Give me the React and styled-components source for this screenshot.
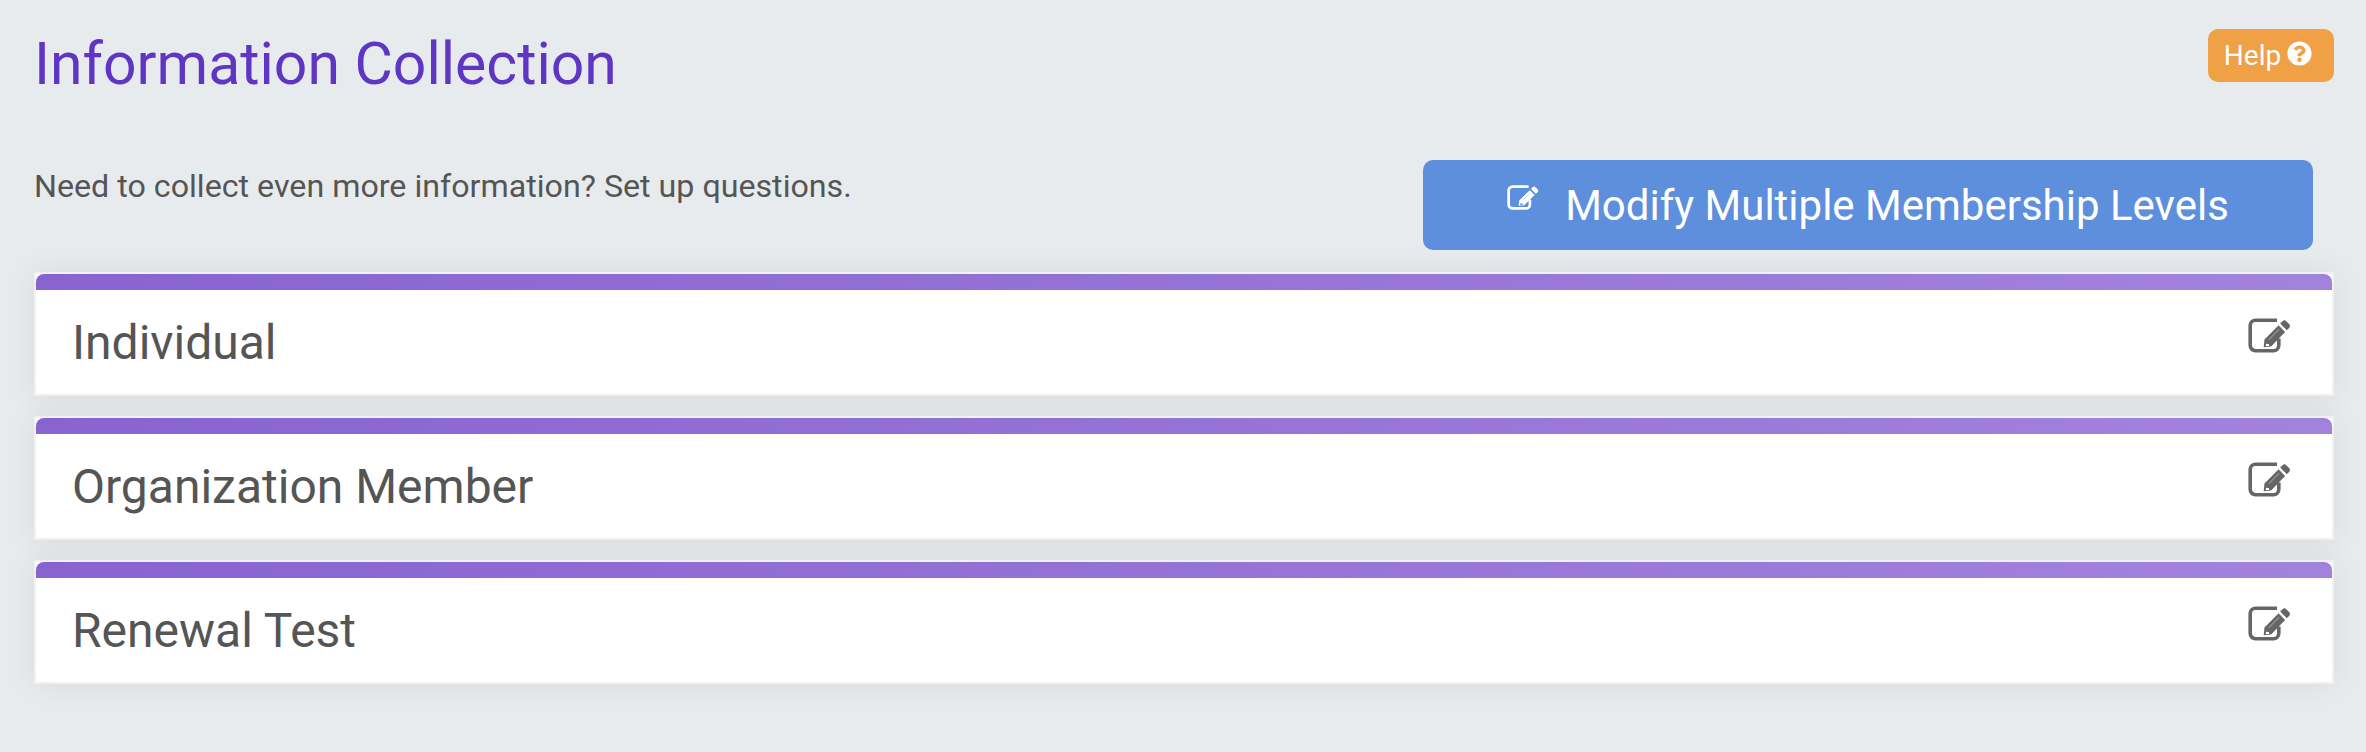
import React from "react";
import styled, { createGlobalStyle } from "styled-components";
import { FaQuestionCircle } from "react-icons/fa";

const GlobalStyle = createGlobalStyle`
  html, body {
    margin: 0;
    padding: 0;
    background: #e8ebee;
    font-family: Roboto, "Liberation Sans", sans-serif;
    color: #555;
  }
`;

const Page = styled.div`
  box-sizing: border-box;
  width: 2366px;
  height: 752px;
  overflow: hidden;
  padding: 29px 32px 0 34px;
`;

const Header = styled.header`
  display: flex;
  justify-content: space-between;
  align-items: flex-start;
  height: 131px;
`;

const Title = styled.h1`
  margin: 0;
  font-size: 58.9px;
  line-height: 70px;
  font-weight: 400;
  color: #5f36c4;
`;

const HelpButton = styled.button`
  display: flex;
  align-items: center;
  justify-content: center;
  gap: 6px;
  width: 126px;
  height: 53px;
  padding: 0 6px 0 0;
  border: 0;
  border-radius: 10px;
  background: #f0a045;
  color: #fff;
  font-family: inherit;
  font-size: 28px;
  svg {
    width: 25px;
    height: 25px;
    margin-bottom: 5px;
  }
`;

const IntroRow = styled.div`
  display: flex;
  justify-content: space-between;
  align-items: flex-start;
  height: 112px;
  padding-right: 21px;
`;

const Intro = styled.p`
  margin: 0;
  padding-top: 6px;
  font-size: 32.2px;
  line-height: 40px;
  color: #555;
`;

const ModifyButton = styled.button`
  display: flex;
  align-items: center;
  justify-content: center;
  gap: 26px;
  width: 890px;
  height: 90px;
  border: 0;
  border-radius: 10px;
  background: #5e8fdd;
  color: #fff;
  font-family: inherit;
  font-size: 42px;
  svg {
    width: 32px;
    height: 25px;
    margin-bottom: 15px;
  }
`;

const LevelList = styled.div`
  display: flex;
  flex-direction: column;
  gap: 20px;
`;

const LevelCard = styled.section`
  box-sizing: border-box;
  height: 124px;
  border: 2px solid #f1f1f1;
  background: #fff;
  box-shadow: 0 0 30px rgba(0, 0, 0, 0.07);
`;

const LevelStripe = styled.div`
  height: 16px;
  border-radius: 8px 8px 0 0;
  background: linear-gradient(90deg, #8764d0, #a283dc);
`;

const LevelBody = styled.div`
  display: flex;
  justify-content: space-between;
  align-items: center;
  height: 104px;
  padding: 0 41px 0 36px;
`;

const LevelName = styled.h2`
  margin: 0;
  font-size: 48px;
  font-weight: 400;
  color: #555;
`;

const CardIcon = styled.span`
  display: flex;
  margin-bottom: 14px;
  color: #666;
  svg {
    width: 43px;
    height: 35px;
  }
`;

// the FA edit glyph, the package version has an outlined pencil
function EditGlyph({ cut }) {
  return (
    <svg viewBox="0 0 43 34" fill="none" preserveAspectRatio="none">
      <path
        d="M29 2.2H7.5a5.3 5.3 0 0 0-5.3 5.3v19a5.3 5.3 0 0 0 5.3 5.3h18a5.3 5.3 0 0 0 5.3-5.3V20"
        stroke="currentColor"
        strokeWidth="3.6"
      />
      <path d="M15.7 28.3l.8-7.3L30.6 7l6.5 6.5-14 14.2z" fill="currentColor" />
      <path d="M32.2 5.4l2.3-2.3c1.2-1.2 2.6-1.2 3.8 0l2.8 2.8c1.2 1.2 1.2 2.6 0 3.8l-2.3 2.3z" fill="currentColor" />
      <path d="M18 24.9l2.8.4.3 1.8-3.4.4z" fill={cut} />
      <path d="M20.5 21.5L31 11" stroke={cut} strokeWidth="0.8" opacity="0.6" />
    </svg>
  );
}

const levels = ["Individual", "Organization Member", "Renewal Test"];

export default function App() {
  return (
    <Page>
      <GlobalStyle />
      <Header>
        <Title>Information Collection</Title>
        <HelpButton>
          Help <FaQuestionCircle />
        </HelpButton>
      </Header>
      <IntroRow>
        <Intro>Need to collect even more information? Set up questions.</Intro>
        <ModifyButton>
          <EditGlyph cut="#5e8fdd" />
          Modify Multiple Membership Levels
        </ModifyButton>
      </IntroRow>
      <LevelList>
        {levels.map((name) => (
          <LevelCard key={name}>
            <LevelStripe />
            <LevelBody>
              <LevelName>{name}</LevelName>
              <CardIcon>
                <EditGlyph cut="#fff" />
              </CardIcon>
            </LevelBody>
          </LevelCard>
        ))}
      </LevelList>
    </Page>
  );
}
